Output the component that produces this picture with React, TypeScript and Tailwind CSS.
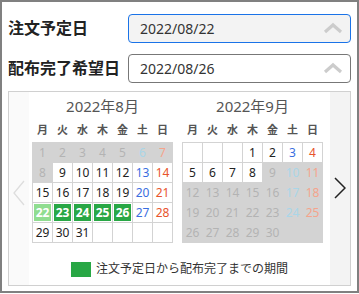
import React from 'react';

type Cell = { d?: number; off?: boolean; sel?: 'start' | 'range' };

const font = { fontFamily: "'Noto Sans', 'Noto Sans CJK JP', sans-serif" };

const WEEK = ['月', '火', '水', '木', '金', '土', '日'];

// August 2022: 1st is Monday, selectable from the 9th
const aug: Cell[] = Array.from({ length: 31 }, (_, i) => {
  const d = i + 1;
  if (d < 9) return { d, off: true };
  if (d === 22) return { d, sel: 'start' };
  if (d >= 23 && d <= 26) return { d, sel: 'range' };
  return { d };
});
while (aug.length < 35) aug.push({});

// September 2022: 1st is Thursday, selectable up to the 8th
const sep: Cell[] = [{}, {}, {}];
for (let d = 1; d <= 30; d++) sep.push(d <= 8 ? { d } : { d, off: true });
while (sep.length < 35) sep.push({ off: true });

function dayColor(col: number, off?: boolean) {
  if (col === 5) return off ? 'text-[#a9d6e8]' : 'text-[#3a6ee0]';
  if (col === 6) return off ? 'text-[#f5a48c]' : 'text-[#e8542c]';
  return off ? 'text-[#b3b3b3]' : 'text-[#222]';
}

function Month({ title, cells }: { title: string; cells: Cell[] }) {
  return (
    <div className="flex flex-col items-center">
      <div className="text-[15px] leading-[20px] text-[#555] mt-[4px]">{title}</div>
      <div className="grid grid-cols-[repeat(7,19px)] gap-px px-px mt-[4px] h-[20px] items-center">
        {WEEK.map((w) => (
          <div key={w} className="text-center text-[11px] font-bold text-[#555]">{w}</div>
        ))}
      </div>
      <div className="grid grid-cols-[repeat(7,19px)] grid-rows-[repeat(5,19px)] gap-px p-px bg-[#d3d3d3] mt-[2px]">
        {cells.map((c, i) => {
          const col = i % 7;
          if (c.off) {
            return (
              <div key={i} className={`flex items-center justify-center text-[12px] ${dayColor(col, true)}`}>
                {c.d}
              </div>
            );
          }
          if (c.sel) {
            return (
              <div key={i} className="bg-white p-px">
                <div
                  className={`w-full h-full flex items-center justify-center text-[12px] font-bold text-white ${
                    c.sel === 'start' ? 'bg-[#90dd90]' : 'bg-[#28a745]'
                  }`}
                >
                  {c.d}
                </div>
              </div>
            );
          }
          return (
            <div key={i} className={`bg-white flex items-center justify-center text-[12px] ${dayColor(col)}`}>
              {c.d}
            </div>
          );
        })}
      </div>
    </div>
  );
}

function ChevronUp() {
  return (
    <svg width="20" height="12" viewBox="0 0 20 12" className="shrink-0">
      <polyline points="2,10 10,3 18,10" fill="none" stroke="#cccccc" strokeWidth="3.2" strokeLinejoin="miter" />
    </svg>
  );
}

function DateField({ value, active }: { value: string; active?: boolean }) {
  return (
    <div
      className={`ml-auto w-[223px] h-[29px] rounded-[4px] border flex items-center pl-[11px] pr-[7px] ${
        active ? 'border-[#1a73e8] bg-[#f3f3f3]' : 'border-[#777] bg-white'
      }`}
    >
      <span className="text-[14px] text-[#333] flex-1">{value}</span>
      <ChevronUp />
    </div>
  );
}

export default function App() {
  return (
    <div style={font} className="w-[359px] h-[293px] border-2 border-[#808080] bg-white flex flex-col px-[6px] pt-[11px]">
      <div className="flex items-center h-[30px]">
        <span className="text-[16px] font-bold text-[#222]">注文予定日</span>
        <DateField value="2022/08/22" active />
      </div>
      <div className="flex items-center h-[30px] mt-[10px]">
        <span className="text-[16px] font-bold text-[#222]">配布完了希望日</span>
        <DateField value="2022/08/26" />
      </div>

      <div className="mt-[8px] w-[343px] h-[195px] border border-[#d0d0d0] flex">
        <div className="w-[20px] bg-[#fafafa] flex items-center justify-center">
          <svg width="12" height="26" viewBox="0 0 12 26" className="mt-[8px]">
            <polyline points="11,1 1,13 11,25" fill="none" stroke="#dddddd" strokeWidth="1.3" />
          </svg>
        </div>
        <div className="flex-1 flex flex-col">
          <div className="flex pl-[3px] gap-[9px]">
            <Month title="2022年8月" cells={aug} />
            <Month title="2022年9月" cells={sep} />
          </div>
          <div className="flex items-center justify-center mt-[17px] gap-[5px]">
            <div className="w-[20px] h-[15px] bg-[#28a745]" />
            <span className="text-[12px] text-[#333]">注文予定日から配布完了までの期間</span>
          </div>
        </div>
        <div className="w-[20px] bg-[#f3f3f3] flex items-center justify-center">
          <svg width="12" height="22" viewBox="0 0 12 22" className="mt-[-2px]">
            <polyline points="1,1 11,11 1,21" fill="none" stroke="#222" strokeWidth="1.5" />
          </svg>
        </div>
      </div>
    </div>
  );
}
